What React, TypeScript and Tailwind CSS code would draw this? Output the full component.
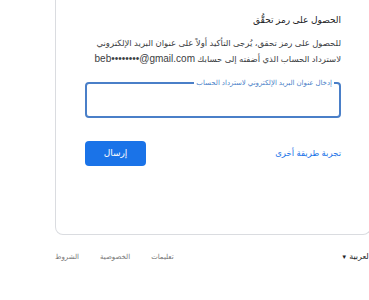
export default function App() {
  return (
    <div
      className="w-[369px] h-[300px] overflow-hidden bg-white pl-[55px]"
      style={{ fontFamily: '"Liberation Sans", "DejaVu Sans", Arial, sans-serif' }}
    >
      <div dir="rtl" className="w-[316px]">
        <div className="h-[235px] border-x border-b border-[#dadce0] rounded-b-lg px-[29px] pt-[11px]">
          <h1 className="text-[9px] leading-[18px] text-[#202124]">الحصول على رمز تحقُّق</h1>
          <p className="mt-[7px] text-[8.5px] leading-[15px] text-[#3c4043]">
            للحصول على رمز تحقق، يُرجى التأكيد أولاً على عنوان البريد الإلكتروني لاسترداد الحساب الذي أضفته إلى حسابك{" "}
            <span dir="ltr" className="text-[10px] leading-[15px] text-[#3c4043]">beb••••••••@gmail.com</span>
          </p>
          <div className="relative mt-[15px] h-[36px] rounded border-2 border-[#4a7fc8]">
            <span className="absolute -top-[6px] right-[5px] bg-white px-[2px] text-[7px] leading-[10px] text-[#4a7fc8]">
              إدخال عنوان البريد الإلكتروني لاسترداد الحساب
            </span>
          </div>
          <div className="mt-[23px] flex items-center justify-between">
            <a className="text-[8.5px] text-[#1a73e8]">تجربة طريقة أخرى</a>
            <button className="h-[25px] w-[61px] rounded bg-[#1a73e8] text-[9px] font-medium text-white">
              إرسال
            </button>
          </div>
        </div>
        <div className="mt-[16px] flex items-center justify-between text-[7px] leading-[12px] text-[#757575]">
          <div className="flex items-center gap-[2px] text-[8px] text-[#202124]">
            <span>العربية</span>
            <span className="text-[6px]">▼</span>
          </div>
          <div className="flex items-center gap-[21px]">
            <span>تعليمات</span>
            <span>الخصوصية</span>
            <span>الشروط</span>
          </div>
        </div>
      </div>
    </div>
  );
}
